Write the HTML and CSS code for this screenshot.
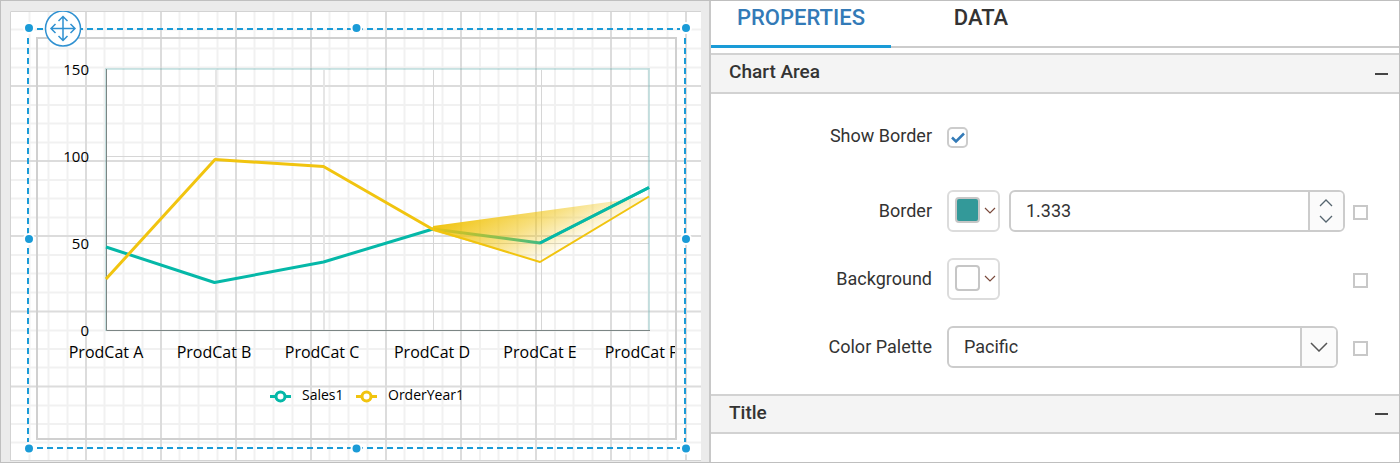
FILE: index.html
```html
<!DOCTYPE html>
<html lang="en">
<head>
<meta charset="utf-8">
<title>Report Designer</title>
<link rel="stylesheet" href="styles.css">
</head>
<body>
<main class="app">
  <section class="designer" aria-label="Design surface">
    <svg class="surface" viewBox="10 11 691 450" role="img" aria-label="Line chart of Sales1 and OrderYear1 by product category">
      <defs>
        <linearGradient id="fade" gradientUnits="userSpaceOnUse" x1="440" y1="222" x2="477" y2="296">
          <stop offset="0" stop-color="#f1c40f"/>
          <stop offset=".5" stop-color="#f1c40f" stop-opacity=".55"/>
          <stop offset="1" stop-color="#f1c40f" stop-opacity="0"/>
        </linearGradient>
        <clipPath id="chart-clip"><rect x="38" y="39" width="637" height="399"/></clipPath>
      </defs>
      <rect class="paper" x="10" y="11" width="691" height="450"/>
      <path class="grid-minor" d="M29.5 11V461M48.5 11V461M67.5 11V461M104.5 11V461M123.5 11V461M142.5 11V461M179.5 11V461M198.5 11V461M217.5 11V461M254.5 11V461M273.5 11V461M292.5 11V461M329.5 11V461M348.5 11V461M367.5 11V461M404.5 11V461M423.5 11V461M442.5 11V461M480 11V461M498.5 11V461M517.5 11V461M555 11V461M573.5 11V461M592.5 11V461M630 11V461M648.5 11V461M667.5 11V461"/>
      <path class="grid-minor" d="M10 29.5H701M10 48.5H701M10 67.5H701M10 105H701M10 123.5H701M10 142.5H701M10 180H701M10 198.5H701M10 217.5H701M10 255H701M10 273.5H701M10 292.5H701M10 330.5H701M10 349H701M10 367.5H701M10 405.5H701M10 424H701M10 442.5H701"/>
      <path class="grid-major" d="M86 11V461M161 11V461M236 11V461M311 11V461M386 11V461M461 11V461M536 11V461M611 11V461M686 11V461M10 86H701M10 161H701M10 236H701M10 311.5H701M10 386.5H701"/>
      <path class="paper-edge" d="M10.5 461V11.5H701M10 460.5H701"/>

      <rect class="chart-frame" x="37" y="38" width="639" height="401"/>

      <path class="plot-line" d="M107 156.5H649M107 243.5H649M433.5 70V330M541.5 70V330"/>
      <path class="plot-line-soft" d="M216 70V330M324 70V330"/>
      <path class="plot-border" d="M106 331V69H649V331"/>
      <path class="axis" d="M106.5 69V330.5H650"/>

      <g clip-path="url(#chart-clip)">
        <polyline class="line-sales" points="106,247 214.500,282.500 323.500,262 433,229 540,243 649,187.500"/>
        <path d="M433 226L649 196.500L540 262L433 231Z" fill="url(#fade)"/>
        <path class="line-sales" d="M540 243L649 187.500"/>
        <polyline class="line-order" points="106,279 215,159.500 323.500,166.500 433,229.500"/>
        <path class="line-order thin" d="M432 229L540 262L649 196.500"/>

        <g class="value-text" text-anchor="end">
          <text x="89" y="75">150</text>
          <text x="89" y="162">100</text>
          <text x="89" y="249">50</text>
          <text x="89" y="336">0</text>
        </g>
        <g class="category-text" text-anchor="middle">
          <text x="106" y="358">ProdCat A</text>
          <text x="214" y="358">ProdCat B</text>
          <text x="322" y="358">ProdCat C</text>
          <text x="432" y="358">ProdCat D</text>
          <text x="540" y="358">ProdCat E</text>
          <text x="641" y="358">ProdCat F</text>
        </g>
        <g class="legend-text">
          <text x="302" y="400">Sales1</text>
          <text x="388" y="400">OrderYear1</text>
        </g>
        <g class="line-sales"><path d="M270 396.500H291"/><circle class="marker" cx="280.500" cy="396.500" r="4.500"/></g>
        <g class="line-order"><path d="M356 396.500H377"/><circle class="marker" cx="366.500" cy="396.500" r="4.500"/></g>
      </g>

      <path class="selection" d="M37 29H680M37 448H680M28 38V442M685 38V442"/>
      <g class="handle">
        <circle cx="29" cy="28" r="5"/><circle cx="356.500" cy="28" r="5"/><circle cx="686" cy="28" r="5"/>
        <circle cx="29" cy="239" r="5"/><circle cx="686" cy="239" r="5"/>
        <circle cx="29" cy="448.500" r="5"/><circle cx="356.500" cy="448.500" r="5"/><circle cx="686" cy="448.500" r="5"/>
      </g>
      <g class="mover">
        <circle cx="63" cy="28.500" r="17.500"/>
        <path d="M63 16.500V40.500M51 28.500H75M58.500 21L63 16.500L67.500 21M58.500 36L63 40.500L67.500 36M55.500 24L51 28.500L55.500 33M70.500 24L75 28.500L70.500 33"/>
      </g>
    </svg>
  </section>

  <section class="panel" aria-label="Chart properties">
    <div class="tabs" role="tablist">
      <button class="tab tab-active" type="button" role="tab" aria-selected="true">PROPERTIES</button>
      <button class="tab" type="button" role="tab" aria-selected="false">DATA</button>
    </div>

    <button class="section-head" type="button" aria-expanded="true"><span>Chart Area</span><i class="minus"></i></button>
    <div class="fields">
      <div class="row row-check">
        <label class="name" for="show-border">Show Border</label>
        <div class="control">
          <span class="check">
            <input id="show-border" type="checkbox" checked>
            <svg viewBox="0 0 21 21"><path d="M5 10.500L9 14.500L17 6.500"/></svg>
          </span>
        </div>
      </div>
      <div class="row">
        <label class="name" for="border-width">Border</label>
        <div class="control">
          <button class="picker" type="button" aria-label="Border color">
            <span class="swatch swatch-teal"></span>
            <svg class="caret" viewBox="0 0 12 8"><path d="M1 1L6 6L11 1"/></svg>
          </button>
          <div class="spinner">
            <input id="border-width" type="text" inputmode="decimal" value="1.333">
            <div class="steps">
              <button type="button" aria-label="Increase"><svg viewBox="0 0 14 8"><path d="M1 7L7 1L13 7"/></svg></button>
              <button type="button" aria-label="Decrease"><svg viewBox="0 0 14 8"><path d="M1 1L7 7L13 1"/></svg></button>
            </div>
          </div>
        </div>
        <button class="option" type="button" aria-label="Border options"></button>
      </div>
      <div class="row">
        <label class="name" for="background">Background</label>
        <div class="control">
          <button class="picker" id="background" type="button">
            <span class="swatch"></span>
            <svg class="caret" viewBox="0 0 12 8"><path d="M1 1L6 6L11 1"/></svg>
          </button>
        </div>
        <button class="option" type="button" aria-label="Background options"></button>
      </div>
      <div class="row">
        <label class="name" for="palette">Color Palette</label>
        <div class="control">
          <div class="dropdown">
            <select id="palette"><option>Pacific</option></select>
            <span class="drop"><svg viewBox="0 0 18 10"><path d="M1 1L9 9L17 1"/></svg></span>
          </div>
        </div>
        <button class="option" type="button" aria-label="Color palette options"></button>
      </div>
    </div>
    <button class="section-head section-head-last" type="button" aria-expanded="true"><span>Title</span><i class="minus"></i></button>
  </section>
</main>
</body>
</html>
```

FILE: styles.css
```css
* { box-sizing: border-box; }

body {
  margin: 0;
  background: #fff;
  color: #333;
  font-family: Roboto, "Liberation Sans", sans-serif;
  font-size: 18px;
}

button, input, select {
  margin: 0;
  padding: 0;
  border: 0;
  background: none;
  color: inherit;
  font: inherit;
}

svg { display: block; }

.app {
  display: grid;
  grid-template-columns: minmax(0, 708fr) minmax(0, 690fr);
  min-height: 100vh;
  border: 1px solid #bfbfbf;
}

/* Design surface */
.designer {
  padding: 10px 8px 0 9px;
  background: #ebebeb;
}
.surface { width: 100%; height: auto; }
.paper { fill: #fff; }
.grid-minor { fill: none; stroke: #f1f1f1; stroke-width: 2; }
.grid-major { fill: none; stroke: #dcdcdc; stroke-width: 2; }
.paper-edge { fill: none; stroke: #d3d3d3; }
.chart-frame { fill: none; stroke: #d0d0d0; stroke-width: 2; }
.plot-line { fill: none; stroke: #d6d6d6; }
.plot-line-soft { fill: none; stroke: #e6e6e6; stroke-width: 2; }
.plot-border { fill: none; stroke: #339999; stroke-opacity: .24; stroke-width: 2; }
.axis { fill: none; stroke: #7c8685; }
.line-sales, .line-order {
  fill: none;
  stroke-width: 3;
  stroke-linejoin: round;
}
.line-sales { stroke: #05b8a8; }
.line-order { stroke: #f1c40f; }
.line-order.thin { stroke-width: 2; }
.marker { fill: #fff; }
.value-text, .category-text, .legend-text {
  fill: #000;
  font-family: "Open Sans", "Noto Sans", sans-serif;
  font-size: 15px;
}
.category-text { font-size: 16px; }
.legend-text { font-size: 14px; }
.selection { fill: none; stroke: #1a9bd7; stroke-width: 2; stroke-dasharray: 6 4; }
.handle { fill: #1a9bd7; stroke: #fff; stroke-width: 2; }
.mover { fill: none; stroke: #3091d1; stroke-width: 1.5; }
.mover circle { fill: #fff; }

/* Property panel */
.panel { border-left: 2px solid #c8c8c8; }
.tabs {
  display: flex;
  height: 47px;
  margin-bottom: 5px;
  border-bottom: 2px solid #ccc;
}
.tab {
  width: 180px;
  height: 47px;
  padding-bottom: 12px;
  border-bottom: 3px solid transparent;
  font-size: 22px;
  font-weight: 500;
}
.tab-active { border-color: #1a9bd7; color: #337ab7; }

.section-head {
  display: flex;
  align-items: center;
  justify-content: space-between;
  width: 100%;
  height: 41px;
  padding: 0 11px 4px 18px;
  border: solid #d2d2d2;
  border-width: 2px 0;
  background: #f4f4f4;
  font-size: 19px;
  font-weight: 500;
}
.section-head-last { height: 40px; }
.minus { width: 13px; height: 2px; margin-top: 4px; background: #444; }

.fields { display: grid; gap: 26px; padding: 22px 0 26px; }
.row {
  display: grid;
  grid-template-columns: 221px minmax(0, 1fr) 15px;
  align-items: center;
  min-height: 42px;
  padding-right: 31px;
}
.row-check { margin-bottom: 6px; }
.name { padding-bottom: 2px; text-align: right; }
.row-check .name { padding-bottom: 4px; }
.control { display: flex; gap: 9px; margin: 0 8px 0 15px; }

.check { position: relative; width: 21px; height: 21px; }
.check input {
  display: block;
  width: 100%;
  height: 100%;
  border: 2px solid #ccc;
  border-radius: 5px;
  appearance: none;
}
.check svg {
  position: absolute;
  inset: 0;
  fill: none;
  stroke: #337ab7;
  stroke-width: 2.5;
  pointer-events: none;
}
.check input:not(:checked) + svg { display: none; }

.picker {
  display: flex;
  align-items: center;
  gap: 4px;
  width: 53px;
  height: 42px;
  padding: 0 0 2px 6px;
  border: 2px solid #dcdcdc;
  border-radius: 6px;
}
.swatch {
  width: 25px;
  height: 26px;
  border: 2px solid #c6c6c6;
  border-radius: 4px;
  background: #fff;
}
.swatch-teal { background: #339999; }
.caret { width: 12px; height: 8px; margin-top: 2px; fill: none; stroke: #7a4a3c; stroke-width: 1.2; }

.spinner, .dropdown {
  display: flex;
  flex: 1;
  height: 42px;
  border: 2px solid #ccc;
  border-radius: 6px;
  overflow: hidden;
}
.dropdown { position: relative; margin-right: 7px; }
.spinner input, .dropdown select {
  flex: 1;
  min-width: 0;
  padding: 0 15px 2px;
  appearance: none;
}
.steps {
  display: flex;
  flex-direction: column;
  justify-content: center;
  gap: 8px;
  width: 35px;
  padding-right: 2px;
  border-left: 2px solid #ccc;
  background: #fbfbfb;
}
.steps button { display: grid; place-items: center; }
.steps svg { width: 14px; height: 8px; fill: none; stroke: #56656f; stroke-width: 1.3; }
.drop {
  position: absolute;
  inset: 0 0 0 auto;
  display: grid;
  place-items: center;
  width: 36px;
  border-left: 2px solid #ccc;
  background: #fbfbfb;
  pointer-events: none;
}
.drop svg { width: 18px; height: 10px; fill: none; stroke: #555; stroke-width: 1.5; }

.option { width: 15px; height: 15px; margin-top: 3px; border: 2px solid #c8c8c8; }
```
